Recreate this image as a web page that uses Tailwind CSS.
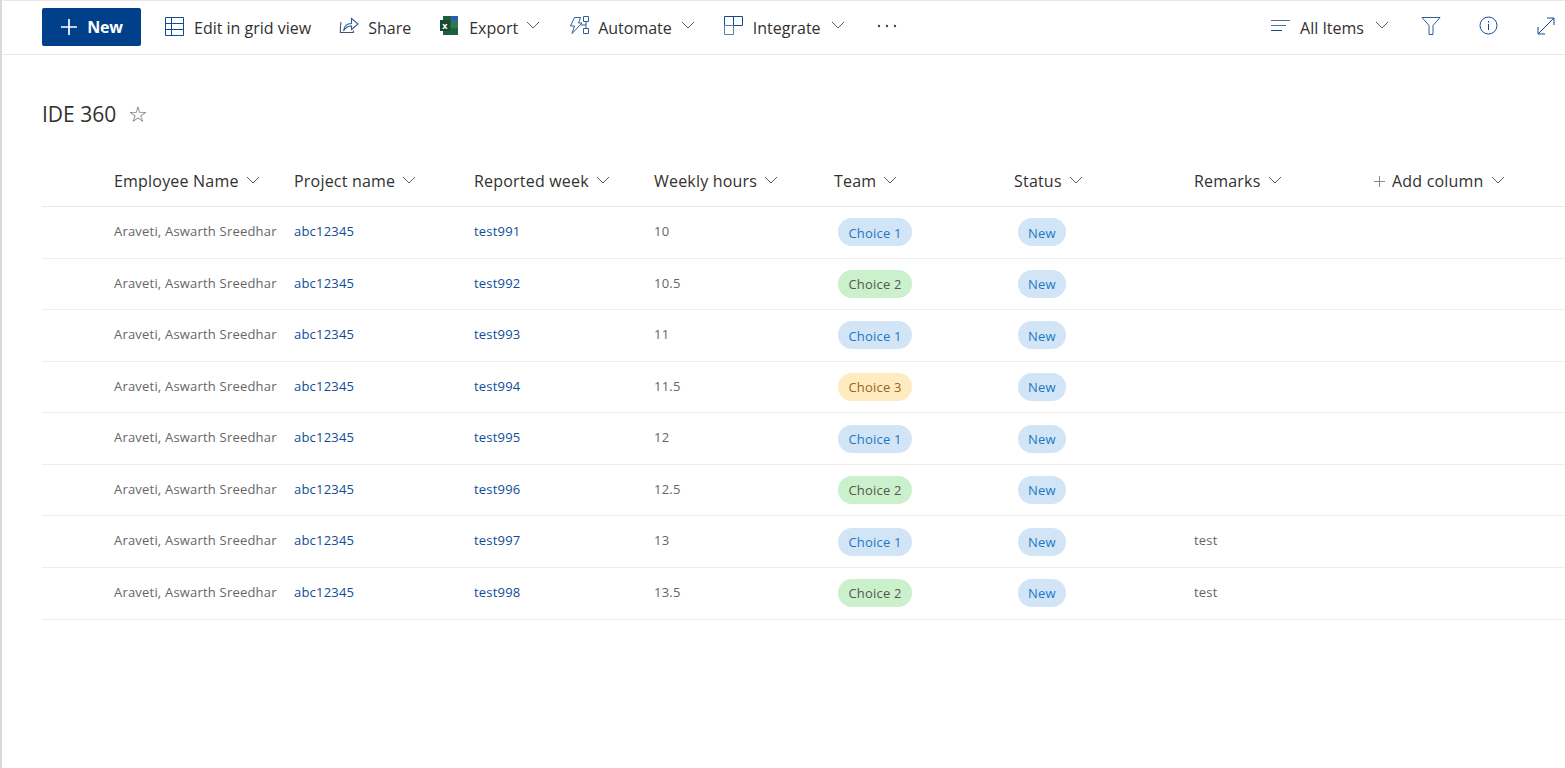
<!DOCTYPE html>
<html lang="en">

<head>
    <meta charset="UTF-8">
    <title>IDE 360</title>
    <script src="https://cdn.jsdelivr.net/npm/@tailwindcss/browser@4"></script>
</head>

<body class="bg-white font-['Open_Sans',sans-serif] text-[#323130] overflow-hidden h-[768px]">
    <div class="h-[768px] border-l-2 border-[#d9d9d9] pl-[1px]">

        <!-- Command bar -->
        <div class="h-[55px] border-t border-b border-[#e8e8e8] flex items-center pl-[39px] pr-[10px] text-[16px]">
            <button class="w-[99px] h-[38px] mt-[-1px] bg-[#003f8a] rounded-[2px] flex items-center justify-center gap-[9px] text-white font-bold text-[16px] tracking-[-0.3px]">
                <svg class="w-[18px] h-[18px]" viewBox="0 0 18 18" fill="none" stroke="white" stroke-width="1.7"><path d="M9 1v16M1 9h16"/></svg>
                New
            </button>

            <div class="flex items-center ml-[24px] gap-[10px]">
                <svg class="w-[19px] h-[19px] mt-[-2px]" viewBox="0 0 19 19" fill="none" stroke="#0f4c8f" stroke-width="1"><path d="M.5.5h18v18H.5zM.5 6.500h18M.5 12.500h18M6.500.5v18"/></svg>
                <span>Edit in grid view</span>
            </div>

            <div class="flex items-center ml-[28px] gap-[9px]">
                <svg class="w-[20px] h-[19px] mt-[-4px]" viewBox="0 0 20 19" fill="none" stroke="#44546a" stroke-width="1.1"><path d="M2 6C1.500 9 1.300 12 1.300 16.500h13v-2"/><path stroke="#2f5f96" d="M4.500 15c.5-4.500 3.500-7.500 8-7.500V2.500l6.500 5.500-6.500 5.500V10c-3 0-6 1.500-8 5z"/></svg>
                <span>Share</span>
            </div>

            <div class="flex items-center ml-[29px] gap-[11px]">
                <svg class="w-[18px] h-[19px] mt-[-4px]" viewBox="0 0 18 19"><rect x="3" y="0" width="15" height="19" fill="#1e5f3e"/><rect x="11" y="0" width="7" height="5" fill="#2f5ea8"/><rect x="11" y="5" width="7" height="7" fill="#2a7a50"/><rect x="0" y="4" width="10" height="11" fill="#174a2e"/><text x="2.200" y="12.500" font-size="9" font-weight="700" fill="white">x</text></svg>
                <span>Export</span>
                <svg class="w-[14px] h-[8px] ml-[-3px] mt-[-6px]" viewBox="0 0 14 8" fill="none" stroke="#605e5c"><path d="M1 1l6 6 6-6"/></svg>
            </div>

            <div class="flex items-center ml-[29px] gap-[9px]">
                <svg class="w-[20px] h-[19px] mt-[-4px]" viewBox="0 0 20 19" fill="none" stroke="#2f5f96" stroke-width="1"><path d="M5.500 1.500h6L9.500 7h3.500L3 17.500 5.500 10H1.500zM14.500.5h5v5h-5zM14.500 12.500h5v5h-5zM17 5.500v7M12 9h5"/></svg>
                <span>Automate</span>
                <svg class="w-[14px] h-[8px] mt-[-6px]" viewBox="0 0 14 8" fill="none" stroke="#605e5c"><path d="M1 1l6 6 6-6"/></svg>
            </div>

            <div class="flex items-center ml-[29px] gap-[10px]">
                <svg class="w-[19px] h-[19px] mt-[-4px]" viewBox="0 0 19 19" fill="none" stroke-width="1"><path stroke="#0f4c8f" d="M.5 9.500V.5h18v9H9.500V.5"/><path stroke="#5d80a8" d="M.5 9.500v9h9v-9h-9"/></svg>
                <span>Integrate</span>
                <svg class="w-[14px] h-[8px] mt-[-6px]" viewBox="0 0 14 8" fill="none" stroke="#605e5c"><path d="M1 1l6 6 6-6"/></svg>
            </div>

            <svg class="w-[20px] h-[4px] ml-[32px] mt-[-4px]" viewBox="0 0 20 4" fill="#3b4656"><circle cx="2" cy="2" r="1.200"/><circle cx="10" cy="2" r="1.200"/><circle cx="18" cy="2" r="1.200"/></svg>

            <div class="flex items-center ml-auto">
                <svg class="w-[20px] h-[14px] mt-[-4px]" viewBox="0 0 20 14" fill="none"><path stroke="#5d6f85" d="M0 1.500h19M0 6.500h15"/><path stroke="#0f4c8f" d="M0 11.500h11"/></svg>
                <span class="ml-[9px]">All Items</span>
                <svg class="w-[14px] h-[8px] ml-[11px] mt-[-6px]" viewBox="0 0 14 8" fill="none" stroke="#605e5c"><path d="M1 1l6 6 6-6"/></svg>
                <svg class="w-[20px] h-[18px] ml-[32px] mt-[-4px]" viewBox="0 0 20 18" fill="none" stroke="#2f5f96"><path d="M1 .5h18l-7 8v9H8v-9z"/></svg>
                <svg class="w-[19px] h-[19px] ml-[38px] mt-[-4px]" viewBox="0 0 19 19" fill="none" stroke="#0f4c8f"><circle cx="9.500" cy="9.500" r="8.500"/><path d="M9.500 8v6M9.500 5v1.500"/></svg>
                <svg class="w-[18px] h-[18px] ml-[39px] mt-[-4px]" viewBox="0 0 18 18" fill="none" stroke="#0f4c8f"><path d="M1 17L17 1M10 1h7v7M1 10v7h7"/></svg>
            </div>
        </div>

        <!-- Title -->
        <div class="flex items-center pl-[39px] mt-[44px] h-[32px]">
            <h1 class="text-[21px]">IDE 360</h1>
            <span class="ml-[12px] mt-[-4px] text-[22px] text-[#605e5c] leading-none">☆</span>
        </div>

        <!-- List -->
        <div class="ml-[39px] mt-[25px] text-[13px]">
            <div class="h-[51px] pl-[72px] grid grid-cols-[repeat(8,180px)] items-center border-b border-[#e8e8e8] text-[16px] tracking-[0.2px]">
                <div class="flex items-center gap-[7px]">Employee Name<svg class="w-[14px] h-[8px] mt-[-3px]" viewBox="0 0 14 8" fill="none" stroke="#605e5c"><path d="M1 1l6 6 6-6"/></svg></div>
                <div class="flex items-center gap-[7px]">Project name<svg class="w-[14px] h-[8px] mt-[-3px]" viewBox="0 0 14 8" fill="none" stroke="#605e5c"><path d="M1 1l6 6 6-6"/></svg></div>
                <div class="flex items-center gap-[7px]">Reported week<svg class="w-[14px] h-[8px] mt-[-3px]" viewBox="0 0 14 8" fill="none" stroke="#605e5c"><path d="M1 1l6 6 6-6"/></svg></div>
                <div class="flex items-center gap-[7px]">Weekly hours<svg class="w-[14px] h-[8px] mt-[-3px]" viewBox="0 0 14 8" fill="none" stroke="#605e5c"><path d="M1 1l6 6 6-6"/></svg></div>
                <div class="flex items-center gap-[7px]">Team<svg class="w-[14px] h-[8px] mt-[-3px]" viewBox="0 0 14 8" fill="none" stroke="#605e5c"><path d="M1 1l6 6 6-6"/></svg></div>
                <div class="flex items-center gap-[7px]">Status<svg class="w-[14px] h-[8px] mt-[-3px]" viewBox="0 0 14 8" fill="none" stroke="#605e5c"><path d="M1 1l6 6 6-6"/></svg></div>
                <div class="flex items-center gap-[7px]">Remarks<svg class="w-[14px] h-[8px] mt-[-3px]" viewBox="0 0 14 8" fill="none" stroke="#605e5c"><path d="M1 1l6 6 6-6"/></svg></div>
                <div class="flex items-center gap-[7px]"><svg class="w-[11px] h-[11px]" viewBox="0 0 11 11" fill="none" stroke="#8a8886"><path d="M5.500 0v11M0 5.500h11"/></svg>Add column<svg class="w-[14px] h-[8px] mt-[-3px]" viewBox="0 0 14 8" fill="none" stroke="#605e5c"><path d="M1 1l6 6 6-6"/></svg></div>
            </div>
            <div id="rows"></div>
        </div>
    </div>

    <script>
        const rows = [
            ['test991', '10', 1, ''],
            ['test992', '10.5', 2, ''],
            ['test993', '11', 1, ''],
            ['test994', '11.5', 3, ''],
            ['test995', '12', 1, ''],
            ['test996', '12.5', 2, ''],
            ['test997', '13', 1, 'test'],
            ['test998', '13.5', 2, 'test'],
        ];
        const pills = {
            1: 'bg-[#d2e5f6] text-[#1b78c4]',
            2: 'bg-[#caf0cc] text-[#56584f]',
            3: 'bg-[#ffebc0] text-[#9a6322]',
        };
        document.getElementById('rows').innerHTML = rows.map(([week, hours, team, remarks]) => `
            <div class="h-[51.57px] pl-[72px] grid grid-cols-[repeat(8,180px)] items-center border-b border-[#eeeeee] text-[13px] tracking-[0.2px] text-[#666666]">
                <div class="mt-[-1px] whitespace-nowrap">Araveti, Aswarth Sreedhar</div>
                <div class="mt-[-1px] text-[#0f4c98]">abc12345</div>
                <div class="mt-[-1px] text-[#0f4c98]">${week}</div>
                <div class="mt-[-1px]">${hours}</div>
                <div><span class="ml-[4px] inline-flex items-center justify-center h-[28px] w-[74px] pt-[2px] rounded-full ${pills[team]}">Choice ${team}</span></div>
                <div><span class="ml-[4px] inline-flex items-center justify-center h-[28px] w-[48px] pt-[2px] rounded-full ${pills[1]}">New</span></div>
                <div class="mt-[-1px]">${remarks}</div>
                <div></div>
            </div>`).join('');
    </script>
</body>

</html>
